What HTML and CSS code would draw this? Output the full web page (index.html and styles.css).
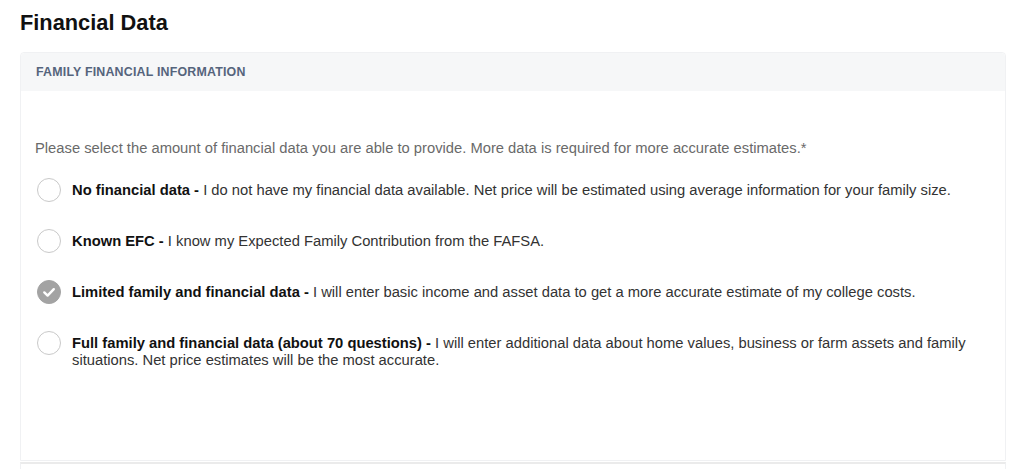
FILE: index.html
```html
<!DOCTYPE html>
<html lang="en">
<head>
<meta charset="utf-8">
<title>Financial Data</title>
<link rel="stylesheet" href="styles.css">
</head>
<body>
<main class="page">
  <h1 class="title">Financial Data</h1>
  <section class="card">
    <header class="card-header">FAMILY FINANCIAL INFORMATION</header>
    <div class="card-body">
      <p class="intro">Please select the amount of financial data you are able to provide. More data is required for more accurate estimates.*</p>
      <div class="options">
        <label class="option">
          <span class="radio"></span>
          <span class="option-text"><b>No financial data -</b> I do not have my financial data available. Net price will be estimated using average information for your family size.</span>
        </label>
        <label class="option">
          <span class="radio"></span>
          <span class="option-text"><b>Known EFC -</b> I know my Expected Family Contribution from the FAFSA.</span>
        </label>
        <label class="option">
          <span class="radio checked">
            <svg viewBox="0 0 24 24" width="24" height="24"><path d="M7.3 12.4 L10.6 15.6 L16.8 9.2" fill="none" stroke="#fff" stroke-width="2.4" stroke-linecap="round" stroke-linejoin="round"/></svg>
          </span>
          <span class="option-text"><b>Limited family and financial data -</b> I will enter basic income and asset data to get a more accurate estimate of my college costs.</span>
        </label>
        <label class="option">
          <span class="radio"></span>
          <span class="option-text"><b>Full family and financial data (about 70 questions) -</b> I will enter additional data about home values, business or farm assets and family situations. Net price estimates will be the most accurate.</span>
        </label>
      </div>
    </div>
  </section>
  <div class="next-card"></div>
</main>
</body>
</html>
```
FILE: styles.css
```css
html, body {
  margin: 0;
  padding: 0;
  background: #ffffff;
  font-family: "Liberation Sans", Arial, sans-serif;
  color: #222;
}

.page {
  padding: 11px 18px 0 20px;
}

.title {
  margin: 0 0 17px 0;
  font-size: 21.8px;
  line-height: 24px;
  font-weight: bold;
  color: #111;
}

.card {
  border: 1px solid #f0f1f3;
  border-radius: 4px 4px 0 0;
  background: #fff;
}

.card-header {
  height: 38px;
  box-sizing: border-box;
  padding: 12px 0 0 15px;
  background: #f6f7f8;
  font-size: 12.4px;
  line-height: 15px;
  letter-spacing: 0.2px;
  font-weight: bold;
  color: #55647c;
  border-radius: 4px 4px 0 0;
}

.card-body {
  padding: 49px 20px 91px 14px;
}

.intro {
  margin: 0;
  font-size: 14.75px;
  line-height: 17px;
  color: #6a6a6a;
}

.options {
  margin-top: 21px;
  display: flex;
  flex-direction: column;
  gap: 27px;
}

.option {
  display: flex;
  align-items: flex-start;
  gap: 11px;
  padding-left: 2px;
}

.radio {
  flex: none;
  width: 24px;
  height: 24px;
  box-sizing: border-box;
  border: 1px solid #c9c9c9;
  border-radius: 50%;
  background: #fff;
  display: flex;
  align-items: center;
  justify-content: center;
}

.radio.checked {
  border-color: #a3a3a3;
  background: #a3a3a3;
}

.radio svg {
  display: block;
  flex: none;
}

.option-text {
  margin-top: 4px;
  font-size: 14.75px;
  line-height: 17px;
  color: #333;
}

.option-text b {
  color: #111;
}

.next-card {
  margin-top: 1px;
  height: 10px;
  border-top: 2px solid #ebebeb;
  border-left: 1px solid #f0f1f3;
  border-right: 1px solid #f0f1f3;
}
```
